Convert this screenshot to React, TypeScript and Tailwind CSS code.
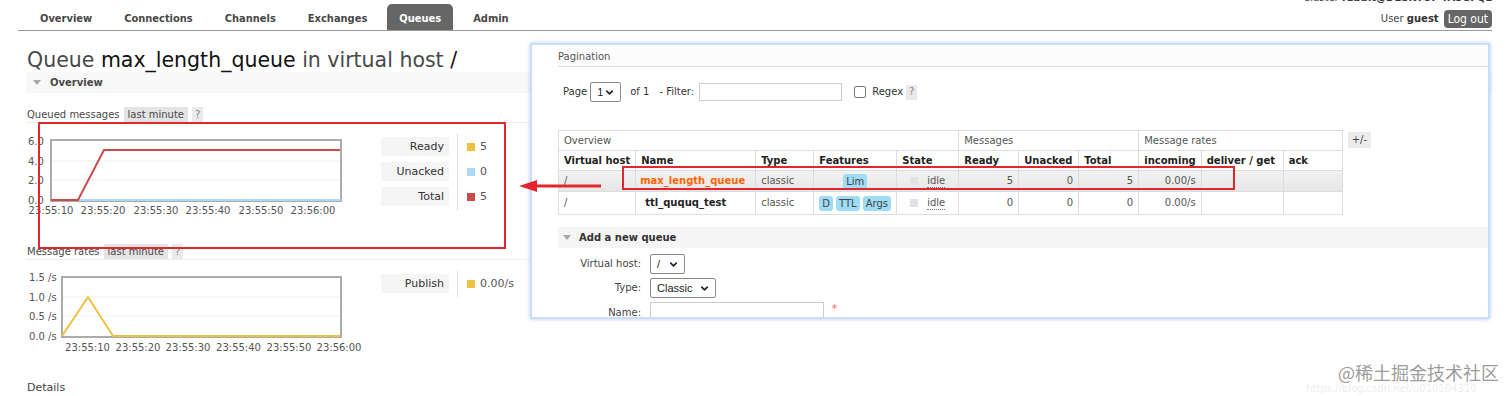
import { ChevronDown } from "lucide-react";

const tabs = ["Overview", "Connections", "Channels", "Exchanges", "Queues", "Admin"];

function Tag({ children, className = "" }: { children: React.ReactNode; className?: string }) {
  return <span className={`inline-flex h-[15px] items-center bg-[#e4e4e4] px-[4px] text-[#484848] ${className}`}>{children}</span>;
}

function Help() {
  return <span className="ml-[4px] inline-flex h-[15px] items-center bg-[#eaeaea] px-[3px] text-[#888]">?</span>;
}

function Triangle() {
  return (
    <svg width="8" height="5" viewBox="0 0 8 5" className="shrink-0">
      <polygon points="0,0 8,0 4,5" fill="#a8a8a8" />
    </svg>
  );
}

function Select({ value, width }: { value: string; width: string }) {
  return (
    <div className={`flex h-[20px] ${width} items-center justify-between rounded-[2px] border border-[#8a8a8a] bg-white pl-[6px] pr-[5px] font-['Liberation_Sans',sans-serif] text-[11px] text-[#222]`}>
      <span>{value}</span>
      <ChevronDown size={11} strokeWidth={3.5} className="text-[#222]" />
    </div>
  );
}

type LegendRow = { label: string; color: string; value: string };

function Legend({ rows }: { rows: LegendRow[] }) {
  return (
    <div className="ml-[15px] flex items-start">
      <div className="flex flex-col gap-[6px] pt-[6px]">
        {rows.map((r) => (
          <div key={r.label} className="h-[19px] w-[68px] bg-[#f5f5f5] pr-[5px] text-right text-[11px] leading-[19px] text-[#333]">
            {r.label}
          </div>
        ))}
      </div>
      <div className="ml-[8px] mt-[3px] flex flex-col gap-[6px] border-l border-[#ddd] pb-[4px] pl-[9px] pt-[3px]">
        {rows.map((r) => (
          <div key={r.label} className="flex h-[19px] items-center text-[11px] text-[#555]">
            <span className={`h-[8px] w-[8px] ${r.color}`} />
            <span className="ml-[5px]">{r.value}</span>
          </div>
        ))}
      </div>
    </div>
  );
}

function QueuedChart() {
  const xs = [25, 77, 130, 182, 235, 287];
  const times = ["23:55:10", "23:55:20", "23:55:30", "23:55:40", "23:55:50", "23:56:00"];
  return (
    <svg width="340" height="90" className="shrink-0" fontSize="10" fill="#545454">
      <line x1="25" x2="315" y1="30" y2="30" stroke="#f0f0f0" />
      <line x1="25" x2="315" y1="49" y2="49" stroke="#f0f0f0" />
      <rect x="25" y="9" width="290" height="61" fill="none" stroke="#ababab" strokeWidth="2" />
      <polyline points="25,69 315,69" fill="none" stroke="#afd8f8" strokeWidth="2" />
      <polyline points="25,69 52,69 78,19 314,19" fill="none" stroke="#cb4b4b" strokeWidth="2" />
      {["6.0", "4.0", "2.0", "0.0"].map((t, i) => (
        <text key={t} x="2" y={[10, 30, 49, 69][i]} dominantBaseline="central">{t}</text>
      ))}
      {times.map((t, i) => (
        <text key={t} x={xs[i]} y="79" textAnchor="middle" dominantBaseline="central">{t}</text>
      ))}
    </svg>
  );
}

function RatesChart() {
  const xs = [61.5, 112, 162, 212.5, 263, 313];
  const times = ["23:55:10", "23:55:20", "23:55:30", "23:55:40", "23:55:50", "23:56:00"];
  return (
    <svg width="340" height="90" className="shrink-0" fontSize="10" fill="#545454">
      <line x1="36" x2="315" y1="29" y2="29" stroke="#f0f0f0" />
      <line x1="36" x2="315" y1="48" y2="48" stroke="#f0f0f0" />
      <rect x="36" y="9" width="279" height="60" fill="none" stroke="#ababab" strokeWidth="2" />
      <polyline points="36,68 62,29 87,68 314,68" fill="none" stroke="#edc240" strokeWidth="2" />
      {["1.5 /s", "1.0 /s", "0.5 /s", "0.0 /s"].map((t, i) => (
        <text key={t} x="3" y={[9, 29, 48, 68][i]} dominantBaseline="central">{t}</text>
      ))}
      {times.map((t, i) => (
        <text key={t} x={xs[i]} y="79" textAnchor="middle" dominantBaseline="central">{t}</text>
      ))}
    </svg>
  );
}

function Feature({ children }: { children: React.ReactNode }) {
  return <span className="inline-block rounded-[3px] bg-[#9fdcf5] px-[3px] leading-[15px] text-[#444]">{children}</span>;
}

function StateCell() {
  return (
    <div className="flex items-center justify-center gap-[9px]">
      <span className="h-[8px] w-[8px] bg-[#e2e2e2]" />
      <span className="border-b border-dotted border-[#777] leading-[12px] text-[#555]">idle</span>
    </div>
  );
}

function QueuesPanel() {
  const th = "border border-[#ddd] px-[5px] text-left";
  const td = "border border-[#ddd] px-[5px]";
  return (
    <div className="absolute left-[530px] top-[43px] h-[276px] w-[960px] overflow-hidden border-2 border-[#c9ddf8] bg-white shadow-[0_0_4px_rgba(130,170,235,0.6)]">
      <div className="pl-[26px]">
        <div className="h-[22px] border-b border-[#ddd] bg-[#fcfcfc] pt-[5px] text-[#555]">Pagination</div>

        <div className="mt-[15px] flex h-[20px] items-center pl-[5px] text-[#333]">
          <span>Page</span>
          <div className="ml-[3px]">
            <Select value="1" width="w-[31px]" />
          </div>
          <span className="ml-[9px]">of 1</span>
          <span className="ml-[10px]">- Filter:</span>
          <div className="ml-[5px] h-[18px] w-[143px] border border-[#ccc]" />
          <div className="ml-[12px] h-[12px] w-[12px] rounded-[2px] border border-[#777]" />
          <span className="ml-[6px]">Regex</span>
          <span className="ml-[3px]">
            <span className="inline-flex h-[15px] items-center bg-[#eaeaea] px-[3px] text-[#888]">?</span>
          </span>
        </div>

        <div className="mt-[28px] flex items-start">
          <table className="table-fixed border-collapse text-[#555]">
            <colgroup>
              {[77, 120, 58, 83, 62, 60, 60, 60, 61, 82, 59].map((w, i) => (
                <col key={i} style={{ width: w }} />
              ))}
            </colgroup>
            <thead>
              <tr className="h-[20px]">
                <th colSpan={5} className={`${th} font-normal`}>Overview</th>
                <th colSpan={3} className={`${th} font-normal`}>Messages</th>
                <th colSpan={3} className={`${th} font-normal`}>Message rates</th>
              </tr>
              <tr className="h-[20px] text-[#222]">
                {["Virtual host", "Name", "Type", "Features", "State", "Ready", "Unacked", "Total", "incoming", "deliver / get", "ack"].map((h) => (
                  <th key={h} className={`${th} whitespace-nowrap font-bold`}>{h}</th>
                ))}
              </tr>
            </thead>
            <tbody>
              <tr className="h-[21px] bg-gradient-to-b from-[#f2f2f2] to-[#e6e6e6]">
                <td className={td}>/</td>
                <td className={`${td} pl-[4px] font-bold text-[#f60]`}>max_length_queue</td>
                <td className={td}>classic</td>
                <td className={`${td} text-center`}><Feature>Lim</Feature></td>
                <td className={td}><StateCell /></td>
                <td className={`${td} text-right`}>5</td>
                <td className={`${td} text-right`}>0</td>
                <td className={`${td} text-right`}>5</td>
                <td className={`${td} text-right`}>0.00/s</td>
                <td className={td} />
                <td className={td} />
              </tr>
              <tr className="h-[23px]">
                <td className={td}>/</td>
                <td className={`${td} pl-[9px] font-bold text-[#222]`}>ttl_ququq_test</td>
                <td className={td}>classic</td>
                <td className={`${td} text-center`}>
                  <span className="inline-flex gap-[3px]">
                    <Feature>D</Feature>
                    <Feature>TTL</Feature>
                    <Feature>Args</Feature>
                  </span>
                </td>
                <td className={td}><StateCell /></td>
                <td className={`${td} text-right`}>0</td>
                <td className={`${td} text-right`}>0</td>
                <td className={`${td} text-right`}>0</td>
                <td className={`${td} text-right`}>0.00/s</td>
                <td className={td} />
                <td className={td} />
              </tr>
            </tbody>
          </table>
          <span className="ml-[5px] mt-[2px] inline-flex h-[16px] items-center bg-[#ececec] px-[4px] text-[#444]">+/-</span>
        </div>

        <div className="mt-[12px] flex h-[21px] items-center gap-[8px] bg-[#f5f5f5] pl-[5px] font-bold text-[#333]">
          <Triangle />
          <span>Add a new queue</span>
        </div>

        <div className="mt-[6px] flex flex-col gap-[4px] text-[#444]">
          <div className="flex items-center gap-[9px]">
            <span className="w-[83px] text-right">Virtual host:</span>
            <Select value="/" width="w-[35px]" />
          </div>
          <div className="flex items-center gap-[9px]">
            <span className="w-[83px] text-right">Type:</span>
            <Select value="Classic" width="w-[66px]" />
          </div>
          <div className="flex items-start gap-[9px]">
            <span className="w-[83px] pt-[4px] text-right">Name:</span>
            <div className="h-[20px] w-[174px] border border-[#ccc]" />
            <span className="-ml-[1px] text-[#f55]">*</span>
          </div>
        </div>
      </div>
    </div>
  );
}

export default function App() {
  return (
    <div className="relative h-[396px] w-[1512px] overflow-hidden bg-white font-['DejaVu_Sans',sans-serif] text-[10px] leading-[14px] text-[#484848]">
      {/* Top nav */}
      <header className="ml-[18px] flex h-[31px] w-[1474px] items-end justify-between border-b border-[#999]">
        <nav className="flex items-end gap-[8px] pl-[10px] font-['DejaVu_Sans_Condensed','DejaVu_Sans',sans-serif] text-[11px] font-bold font-stretch-condensed">
          {tabs.map((t) => (
            <span
              key={t}
              className={`flex h-[26px] items-center rounded-t-[5px] px-[12px] pt-[3px] ${t === "Queues" ? "bg-[#666] text-white" : "text-[#484848]"}`}
            >
              {t}
            </span>
          ))}
        </nav>
        <div className="flex flex-col items-end pb-[2px]">
          <div className="mb-[5px]">
            Cluster <b className="text-[#333]">rabbit@DESKTOP-TA8GFQL</b>
          </div>
          <div className="flex h-[18px] items-center">
            <span>
              User <b className="text-[#333]">guest</b>
            </span>
            <span className="ml-[5px] flex h-[18px] items-center rounded-[4px] bg-[#666] px-[4px] font-['DejaVu_Sans_Condensed','DejaVu_Sans',sans-serif] text-[12px] text-white font-stretch-condensed">
              Log out
            </span>
          </div>
        </div>
      </header>

      {/* Queue page */}
      <main className="pl-[26px]">
        <h1 className="mt-[17px] pl-[1px] text-[20.5px] leading-[24px] text-[#484848]">
          Queue <span className="text-[#111]">max_length_queue</span> in virtual host <span className="text-[#111]">/</span>
        </h1>

        <div className="flex h-[21px] w-[1466px] items-center gap-[9px] bg-[#f8f8f8] pl-[7px] font-bold text-[#484848]">
          <Triangle />
          <span>Overview</span>
        </div>

        <div className="mt-[14px] flex h-[16px] w-[1466px] items-start border-b border-[#eee] pl-[1px]">
          <span className="leading-[15px]">Queued messages</span>
          <Tag className="ml-[4px]">last minute</Tag>
          <Help />
        </div>
        <div className="mt-[8px] flex items-start">
          <QueuedChart />
          <Legend
            rows={[
              { label: "Ready", color: "bg-[#edc240]", value: "5" },
              { label: "Unacked", color: "bg-[#afd8f8]", value: "0" },
              { label: "Total", color: "bg-[#cb4b4b]", value: "5" },
            ]}
          />
        </div>

        <div className="mt-[23px] flex h-[16px] w-[1466px] items-start border-b border-[#eee] pl-[1px]">
          <span className="leading-[15px]">Message rates</span>
          <Tag className="ml-[4px]">last minute</Tag>
          <Help />
        </div>
        <div className="mt-[8px] flex items-start">
          <RatesChart />
          <Legend rows={[{ label: "Publish", color: "bg-[#edc240]", value: "0.00/s" }]} />
        </div>

        <div className="mt-[23px] pl-[1px] text-[11px] text-[#444]">Details</div>
      </main>

      <QueuesPanel />

      {/* Annotations */}
      <div className="absolute left-[38px] top-[122px] h-[127px] w-[468px] border-2 border-[#e3262e]" />
      <div className="absolute left-[622px] top-[166px] h-[24px] w-[613px] border-2 border-[#e3262e]" />
      <svg className="absolute left-[515px] top-[178px]" width="90" height="16" viewBox="0 0 90 16">
        <line x1="20" y1="8" x2="86" y2="8" stroke="#e3262e" strokeWidth="3" />
        <polygon points="4,8 22,2 22,14" fill="#e3262e" />
      </svg>

      {/* Watermark */}
      <div className="absolute left-[1338px] top-[360px] font-['Noto_Sans_CJK_SC',sans-serif] text-[18px] leading-[24px] text-[#9c9c9c]">
        @稀土掘金技术社区
      </div>
      <div className="absolute left-[1306px] top-[383px] text-[10px] leading-[12px] text-[#eeeeee]">https://blog.csdn.net/u010104310</div>
    </div>
  );
}
